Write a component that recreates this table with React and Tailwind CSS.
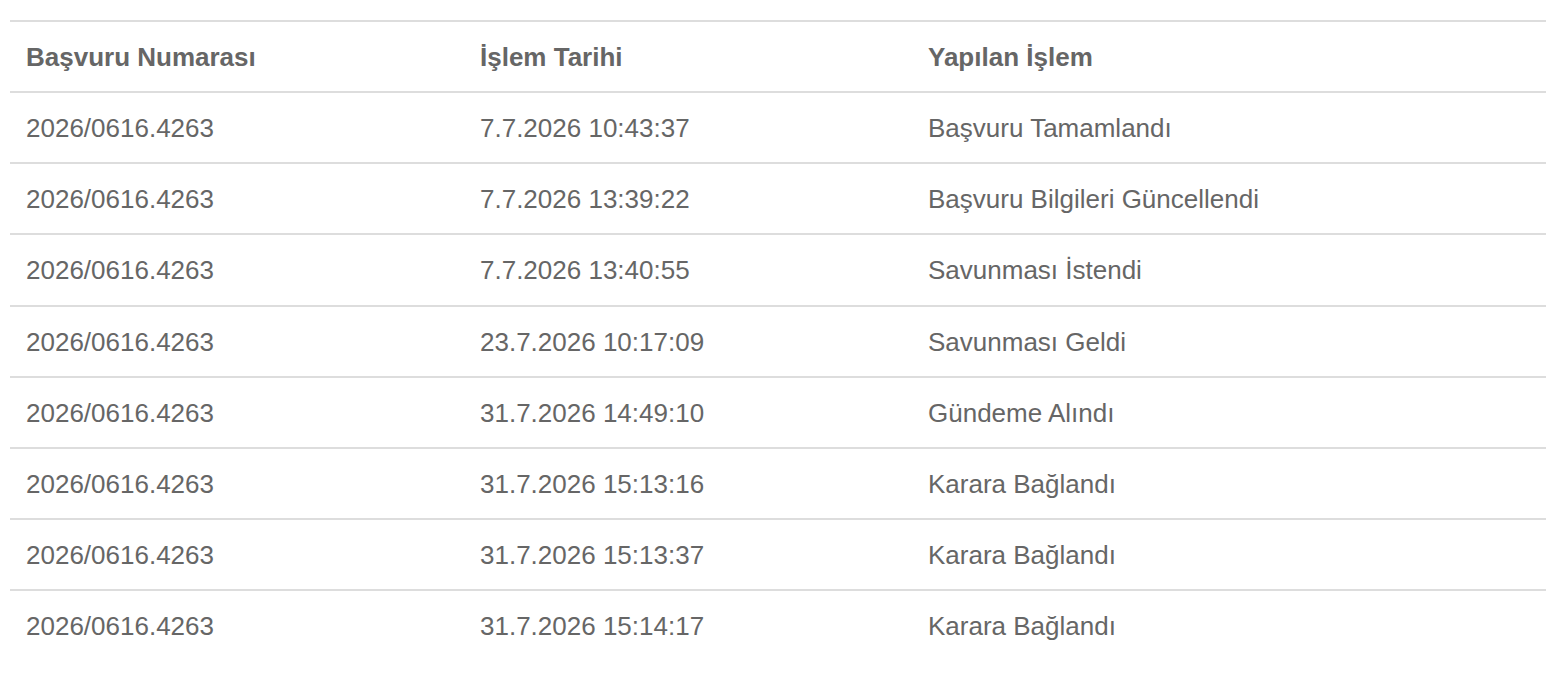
const rows = [
    ["2026/0616.4263", "7.7.2026 10:43:37", "Başvuru Tamamlandı"],
    ["2026/0616.4263", "7.7.2026 13:39:22", "Başvuru Bilgileri Güncellendi"],
    ["2026/0616.4263", "7.7.2026 13:40:55", "Savunması İstendi"],
    ["2026/0616.4263", "23.7.2026 10:17:09", "Savunması Geldi"],
    ["2026/0616.4263", "31.7.2026 14:49:10", "Gündeme Alındı"],
    ["2026/0616.4263", "31.7.2026 15:13:16", "Karara Bağlandı"],
    ["2026/0616.4263", "31.7.2026 15:13:37", "Karara Bağlandı"],
    ["2026/0616.4263", "31.7.2026 15:14:17", "Karara Bağlandı"],
];

const App = () => {
    return (
        <div
            className="min-h-[690px] bg-white pt-5 px-[10px] text-[26px] text-[#666]"
            style={{ fontFamily: '"Liberation Sans", Arial, sans-serif' }}
        >
            <table className="w-[1536px] border-collapse table-fixed">
                <colgroup>
                    <col className="w-[454px]" />
                    <col className="w-[448px]" />
                    <col />
                </colgroup>
                <thead>
                    <tr className="border-t-2 border-[#ddd]">
                        <th className="text-left font-bold px-4 pt-[17px] pb-[15px] leading-[37.14px]">Başvuru Numarası</th>
                        <th className="text-left font-bold px-4 pt-[17px] pb-[15px] leading-[37.14px]">İşlem Tarihi</th>
                        <th className="text-left font-bold px-4 pt-[17px] pb-[15px] leading-[37.14px]">Yapılan İşlem</th>
                    </tr>
                </thead>
                <tbody>
                    {rows.map((row, i) => (
                        <tr key={i} className="border-t-2 border-[#ddd]">
                            {row.map((cell, j) => (
                                <td key={j} className="px-4 pt-[17px] pb-[15px] leading-[37.14px]">
                                    {cell}
                                </td>
                            ))}
                        </tr>
                    ))}
                </tbody>
            </table>
        </div>
    );
};

export default App;
